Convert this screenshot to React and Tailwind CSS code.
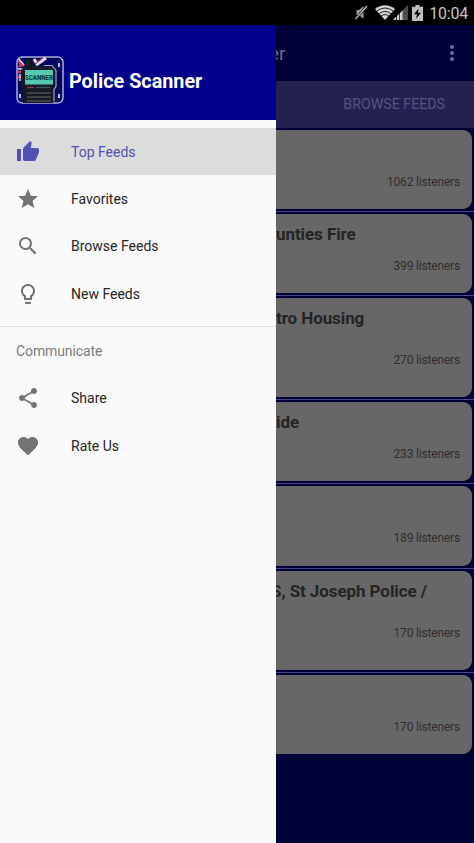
import { MdThumbUp, MdStar, MdSearch, MdLightbulbOutline, MdShare, MdFavorite, MdMoreVert } from "react-icons/md";

const feeds = [
  { listeners: 1062 },
  { title: "unties Fire", listeners: 399 },
  { title: "tro Housing", listeners: 270, tall: true },
  { title: "ide", listeners: 233 },
  { listeners: 189 },
  { title: "S, St Joseph Police /", listeners: 170, tall: true, clipped: true },
  { listeners: 170 },
];

const mainItems = [
  { label: "Top Feeds", icon: MdThumbUp, active: true },
  { label: "Favorites", icon: MdStar },
  { label: "Browse Feeds", icon: MdSearch },
  { label: "New Feeds", icon: MdLightbulbOutline },
];

const communicateItems = [
  { label: "Share", icon: MdShare },
  { label: "Rate Us", icon: MdFavorite },
];

const StatusBar = () => (
  <div className="h-[25px] shrink-0 bg-black flex items-center justify-end pr-[6px] text-[#c4c4c4]">
    <svg className="w-[14px] h-[17px] mr-[7px]" viewBox="0 0 13 17">
      <path d="M2 6h2.500L9 2v13l-4.500-4H2z" fill="#9a9a9a" />
      <path d="M12.500 2 1 15" stroke="#000" strokeWidth="2.500" />
      <path d="M12.500 2 1 15" stroke="#c4c4c4" strokeWidth="1.200" />
    </svg>
    <svg className="w-[20px] h-[15px]" viewBox="0 0 20 15">
      <path d="M0 4Q10-3.500 20 4L10 15z" fill="#d2d2d2" />
      <path d="M1.500 6.200Q10-.2 18.500 6.200M3.800 8.800Q10 4 16.200 8.800M6 11.200Q10 8 14 11.200" fill="none" stroke="#000" strokeWidth=".8" />
    </svg>
    <svg className="w-[15px] h-[15px] -ml-[2px] mr-[4px]" viewBox="0 0 15 15">
      <path d="M0 15 15 0v15z" fill="#4d4d4d" />
      <path d="M0 15 10.500 4.500V15z" fill="#d2d2d2" />
      <path d="M3.500 9v6M6.500 6v9M10 3v12" stroke="#000" strokeWidth=".7" />
    </svg>
    <svg className="w-[11px] h-[16px] mr-[6px]" viewBox="0 0 11 16">
      <path d="M3.500 0h4v1.800H11V16H0V1.800h3.500z" fill="#bdbdbd" />
      <path d="M6.500 3.500 2 9.200h3L4 13.800l5-6H6z" fill="#000" />
    </svg>
    <span className="pt-[2px] text-[16px] leading-none tracking-[-0.2px]">10:04</span>
  </div>
);

const ScannerLogo = () => (
  <svg className="w-[48px] h-[48px] shrink-0" viewBox="0 0 48 48">
    <rect x="1" y="1" width="46" height="46" rx="5" fill="#06065e" stroke="#a9afd6" strokeWidth="1.500" />
    <path d="m2 5 6 5M3 11l4-4M2 16h5M2 21h4" stroke="#d33c54" strokeWidth="2.500" />
    <path d="m3 3 5 6M2 13h5M4 18v7" stroke="#e8e8f5" strokeWidth="1.300" />
    <path d="m18 3 3 5M20 9 30 2" stroke="#e9e4ef" strokeWidth="3" />
    <path d="m19 8 8-6" stroke="#cc4163" strokeWidth="1.500" />
    <path d="M10 3h5v7h20l4 4v17l-2 3v13H7V34l-2-4V14l4-4z" fill="#171a20" />
    <path d="M28 9.500h8l4 5v16l-2 3v12" fill="none" stroke="#a3aad0" strokeWidth="1.200" />
    <path d="M43 7v4M43 38v4M4 38v4" stroke="#b8bddd" strokeWidth="2" />
    <rect x="9" y="14" width="28" height="14.500" fill="#55c9b2" />
    <text x="23" y="24" textAnchor="middle" fontSize="7.500" fontWeight="700" textLength="28" lengthAdjust="spacingAndGlyphs" fill="#06302e">SCANNER</text>
    <path d="M11 31.500h7" stroke="#a33443" strokeWidth="1.300" />
    <path d="M20 31.500h14" stroke="#44516b" strokeWidth="1.300" />
    <path d="M11 37h24M11 41h24M11 45h24" stroke="#4b4c50" strokeWidth="1.300" />
  </svg>
);

const DrawerItem = ({ label, icon: Icon, active }) => (
  <button
    className={`w-full h-[47.400px] pl-[16px] flex items-center text-left text-[14px] ${
      active ? "bg-[#dcdcdc] text-[#5350b4]" : "text-[#262626]"
    }`}
  >
    <Icon className={`w-[24px] h-[24px] mr-[31px] ${active ? "text-[#5350b4]" : "text-[#737373]"}`} />
    <span className="pt-[1px]">{label}</span>
  </button>
);

const Drawer = () => (
  <aside className="w-[276px] shrink-0 bg-[#fafafa]">
    <header className="h-[95px] bg-[#00008b] pl-[16px] pt-[14px] flex items-center">
      <ScannerLogo />
      <h1 className="ml-[5px] pt-[4px] text-[19.800px] font-bold text-white">Police Scanner</h1>
    </header>
    <nav className="pt-[8px]">
      {mainItems.map((item) => (
        <DrawerItem key={item.label} {...item} />
      ))}
      <div className="mt-[8px] border-t border-[#dedede] h-[49px] pt-[2px] pl-[16px] flex items-center text-[14px] tracking-[-0.1px] text-[#7d7d7d]">
        Communicate
      </div>
      {communicateItems.map((item) => (
        <DrawerItem key={item.label} {...item} />
      ))}
    </nav>
  </aside>
);

const FeedCard = ({ feed }) => (
  <li className="border-b border-[#4c4884] pt-[2px] pb-[2px] last:border-0">
    <div
      className={`bg-[#676767] rounded-r-[9px] mr-[2px] pr-[12px] pt-[10px] overflow-hidden ${
        feed.tall ? "h-[99.200px]" : "h-[79.100px]"
      }`}
    >
      <div className={feed.tall ? "h-[44px]" : "h-[34px]"}>
        {feed.title && (
          <h2
            className={`text-[17px] leading-[21px] font-bold text-[#242424] whitespace-nowrap tracking-[-0.08px] ${
              feed.clipped ? "-ml-[5px]" : ""
            }`}
          >
            {feed.title}
          </h2>
        )}
      </div>
      <p className="text-right text-[12px] leading-[16px] tracking-[-0.18px] text-[#2e2e2e]">
        {feed.listeners} listeners
      </p>
    </div>
  </li>
);

const App = () => {
  return (
    <div className="w-[474px] h-[843px] flex flex-col overflow-hidden font-[Roboto,sans-serif]">
      <StatusBar />
      <div className="flex flex-1 min-h-0">
        <Drawer />
        <main className="flex-1 min-w-0 bg-[#000038] overflow-hidden">
          <div className="h-[56px] flex items-center justify-between pr-[10px]">
            <span className="-ml-[7px] pt-[2px] text-[19px] text-[#6b6b8c]">er</span>
            <MdMoreVert className="w-[24px] h-[24px] text-[#6c6c98]" />
          </div>
          <div className="h-[47px] bg-[#242151] flex items-center justify-end pt-[1px] pr-[29px] text-[14.200px] text-[#55537a]">
            BROWSE FEEDS
          </div>
          <ul>
            {feeds.map((feed, i) => (
              <FeedCard key={i} feed={feed} />
            ))}
          </ul>
        </main>
      </div>
    </div>
  );
};

export default App;
